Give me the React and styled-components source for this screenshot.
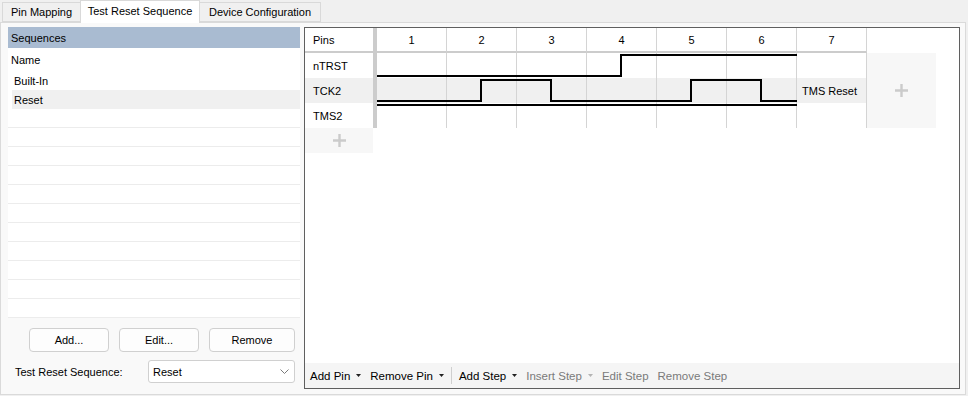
import React from "react";
import styled, { createGlobalStyle } from "styled-components";

const GlobalStyle = createGlobalStyle`
  html, body {
    margin: 0;
    padding: 0;
    background: #f0f0f0;
  }
  body {
    font-family: "Liberation Sans", Arial, sans-serif;
    font-size: 11px;
    color: #000;
  }
`;

const Window = styled.div`
  width: 968px;
  height: 396px;
  display: flex;
  flex-direction: column;
  background: #f0f0f0;
`;

const TabStrip = styled.div`
  display: flex;
  align-items: flex-end;
  height: 22px;
  padding-left: 2px;
  position: relative;
  z-index: 1;
`;

const Tab = styled.div`
  box-sizing: border-box;
  width: ${(p) => p.w}px;
  height: ${(p) => (p.active ? 23 : 20)}px;
  margin-bottom: ${(p) => (p.active ? -1 : 0)}px;
  margin-left: -1px;
  display: flex;
  align-items: center;
  justify-content: center;
  padding-bottom: ${(p) => (p.active ? 2 : 0)}px;
  background: ${(p) => (p.active ? "#ffffff" : "#f0f0f0")};
  border: 1px solid #d9d9d9;
  border-bottom: ${(p) => (p.active ? "none" : "1px solid #d9d9d9")};
  white-space: nowrap;
  &:first-child {
    margin-left: 0;
  }
`;

const TabPage = styled.div`
  box-sizing: border-box;
  width: 966px;
  height: 373px;
  border: 1px solid #dadada;
  background: #f9f9f9;
  padding: 4px 5px 5px 7px;
  display: flex;
  gap: 4px;
`;

const LeftColumn = styled.div`
  width: 292px;
  display: flex;
  flex-direction: column;
`;

const List = styled.div`
  height: 291px;
  background: #fff;
  display: flex;
  flex-direction: column;
  overflow: hidden;
`;

const ListHeader = styled.div`
  height: 21px;
  flex: none;
  background: #a9bbd1;
  padding-left: 3px;
  display: flex;
  align-items: center;
`;

const ColumnHead = styled.div`
  height: 23px;
  flex: none;
  padding-left: 3px;
  display: flex;
  align-items: center;
`;

const DataRow = styled.div`
  height: 19px;
  flex: none;
  margin-left: 4px;
  padding-left: 2px;
  display: flex;
  align-items: center;
  background: ${(p) => (p.selected ? "#f0f0f0" : "transparent")};
`;

const EmptyRow = styled.div`
  box-sizing: border-box;
  height: 19px;
  flex: none;
  border-bottom: 1px solid #ececec;
`;

const ButtonRow = styled.div`
  display: flex;
  justify-content: flex-end;
  gap: 10px;
  padding-right: 5px;
  margin-top: 10px;
`;

const Button = styled.button`
  width: ${(p) => p.w}px;
  height: 24px;
  padding: 0;
  border: 1px solid #d0d0d0;
  border-radius: 4px;
  background: #fdfdfd;
  font: inherit;
  color: #000;
`;

const ComboRow = styled.div`
  display: flex;
  align-items: center;
  margin-top: 8px;
  padding: 0 5px 0 7px;
`;

const Combo = styled.div`
  box-sizing: border-box;
  margin-left: auto;
  width: 147px;
  height: 23px;
  border: 1px solid #d0d0d0;
  border-radius: 3px;
  background: #fff;
  display: flex;
  align-items: center;
  justify-content: space-between;
  padding: 0 5px 0 4px;
`;

const RightPanel = styled.div`
  flex: 1;
  border: 1px solid #5f5f5f;
  background: #fff;
  display: flex;
  flex-direction: column;
`;

const GridArea = styled.div`
  flex: 1;
`;

const Grid = styled.div`
  display: grid;
  grid-template-columns: 68px 4px repeat(7, 70px) 69px;
  grid-template-rows: 25px repeat(4, 25px);
`;

const HeadCell = styled.div`
  box-sizing: border-box;
  grid-row: 1;
  border-bottom: 2px solid #cccccc;
  border-right: ${(p) => (p.step ? "1px solid #d4d4d4" : "none")};
  display: flex;
  align-items: center;
  justify-content: ${(p) => (p.step ? "center" : "flex-start")};
  padding-left: ${(p) => (p.step ? 0 : 8)}px;
`;

const Separator = styled.div`
  grid-column: 2;
  grid-row: 1 / span 4;
  background: #cccccc;
`;

const NameCell = styled.div`
  grid-column: 1;
  grid-row: ${(p) => p.row};
  display: flex;
  align-items: center;
  padding-left: 8px;
  background: ${(p) => (p.alt ? "#f0f0f0" : "#fff")};
`;

const StepCell = styled.div`
  box-sizing: border-box;
  grid-row: ${(p) => p.row};
  border-right: 1px solid #d4d4d4;
  background: ${(p) => (p.alt ? "#f0f0f0" : "#fff")};
  display: flex;
  align-items: center;
  padding-left: 5px;
  position: relative;
`;

const WaveSvg = styled.svg`
  position: absolute;
  left: 0;
  top: 0;
  overflow: visible;
`;

const PlusCell = styled.div`
  grid-column: ${(p) => p.col};
  grid-row: ${(p) => p.rows};
  background: #f7f7f7;
  display: flex;
  align-items: center;
  justify-content: center;
`;

const Toolbar = styled.div`
  height: 25px;
  flex: none;
  background: #f5f5f5;
  display: flex;
  align-items: center;
  gap: 3px;
  padding-left: 2px;
  font-size: 11.5px;
`;

const ToolItem = styled.div`
  display: flex;
  align-items: center;
  gap: 6px;
  padding: 0 3px;
  color: ${(p) => (p.disabled ? "#7a7a7a" : "#000")};
  white-space: nowrap;
`;

const ToolSep = styled.div`
  width: 1px;
  height: 17px;
  margin: 0 1px;
  background: #cfcfcf;
`;

const DropArrow = ({ disabled }) => (
  <svg width="5" height="3" viewBox="0 0 5 3">
    <path d="M0 0h5L2.5 3z" fill={disabled ? "#b4b4b4" : "#222"} />
  </svg>
);

const Chevron = () => (
  <svg width="9" height="5" viewBox="0 0 9 5">
    <path d="M0.5 0.5L4.5 4.5L8.5 0.5" fill="none" stroke="#7a7a7a" strokeWidth="1" />
  </svg>
);

const PlusIcon = () => (
  <svg width="13" height="13" viewBox="0 0 13 13">
    <path d="M6.5 0v13M0 6.5h13" stroke="#cbcbcb" strokeWidth="2.4" />
  </svg>
);

const Wave = ({ from, to }) => {
  const y = (v) => (v ? 2 : 23);
  return (
    <WaveSvg width="69" height="25">
      <polyline
        points={`0,${y(from)} 34,${y(from)} 34,${y(to)} 70,${y(to)}`}
        fill="none"
        stroke="#000"
        strokeWidth="2"
        strokeLinejoin="miter"
      />
    </WaveSvg>
  );
};

const pins = [
  { name: "nTRST", start: 0, levels: [0, 0, 0, 1, 1, 1], label: "" },
  { name: "TCK2", start: 0, levels: [0, 1, 0, 0, 1, 0], label: "TMS Reset", alt: true },
  { name: "TMS2", start: 1, levels: [1, 1, 1, 1, 1, 1], label: "" },
];

const steps = [1, 2, 3, 4, 5, 6, 7];

export default function App() {
  return (
    <Window>
      <GlobalStyle />
      <TabStrip>
        <Tab w={79}>Pin Mapping</Tab>
        <Tab w={120} active>
          Test Reset Sequence
        </Tab>
        <Tab w={122}>Device Configuration</Tab>
      </TabStrip>
      <TabPage>
        <LeftColumn>
          <List>
            <ListHeader>Sequences</ListHeader>
            <ColumnHead>Name</ColumnHead>
            <DataRow>Built-In</DataRow>
            <DataRow selected>Reset</DataRow>
            {Array.from({ length: 11 }).map((_, i) => (
              <EmptyRow key={i} />
            ))}
          </List>
          <ButtonRow>
            <Button w={80}>Add...</Button>
            <Button w={80}>Edit...</Button>
            <Button w={86}>Remove</Button>
          </ButtonRow>
          <ComboRow>
            <span>Test Reset Sequence:</span>
            <Combo>
              <span>Reset</span>
              <Chevron />
            </Combo>
          </ComboRow>
        </LeftColumn>
        <RightPanel>
          <GridArea>
            <Grid>
              <HeadCell style={{ gridColumn: 1 }}>Pins</HeadCell>
              <Separator />
              {steps.map((s) => (
                <HeadCell key={s} step style={{ gridColumn: s + 2 }}>
                  {s}
                </HeadCell>
              ))}
              {pins.map((pin, r) => (
                <React.Fragment key={pin.name}>
                  <NameCell row={r + 2} alt={pin.alt}>
                    {pin.name}
                  </NameCell>
                  {pin.levels.map((lv, i) => (
                    <StepCell
                      key={i}
                      row={r + 2}
                      alt={pin.alt}
                      style={{ gridColumn: i + 3 }}
                    >
                      <Wave from={i === 0 ? pin.start : pin.levels[i - 1]} to={lv} />
                    </StepCell>
                  ))}
                  <StepCell row={r + 2} alt={pin.alt} style={{ gridColumn: 9 }}>
                    {pin.label}
                  </StepCell>
                </React.Fragment>
              ))}
              <PlusCell col={10} rows="2 / span 3">
                <PlusIcon />
              </PlusCell>
              <PlusCell col={1} rows="5">
                <PlusIcon />
              </PlusCell>
            </Grid>
          </GridArea>
          <Toolbar>
            <ToolItem>
              Add Pin <DropArrow />
            </ToolItem>
            <ToolItem>
              Remove Pin <DropArrow />
            </ToolItem>
            <ToolSep />
            <ToolItem>
              Add Step <DropArrow />
            </ToolItem>
            <ToolItem disabled>
              Insert Step <DropArrow disabled />
            </ToolItem>
            <ToolItem disabled>Edit Step</ToolItem>
            <ToolItem disabled>Remove Step</ToolItem>
          </Toolbar>
        </RightPanel>
      </TabPage>
    </Window>
  );
}
